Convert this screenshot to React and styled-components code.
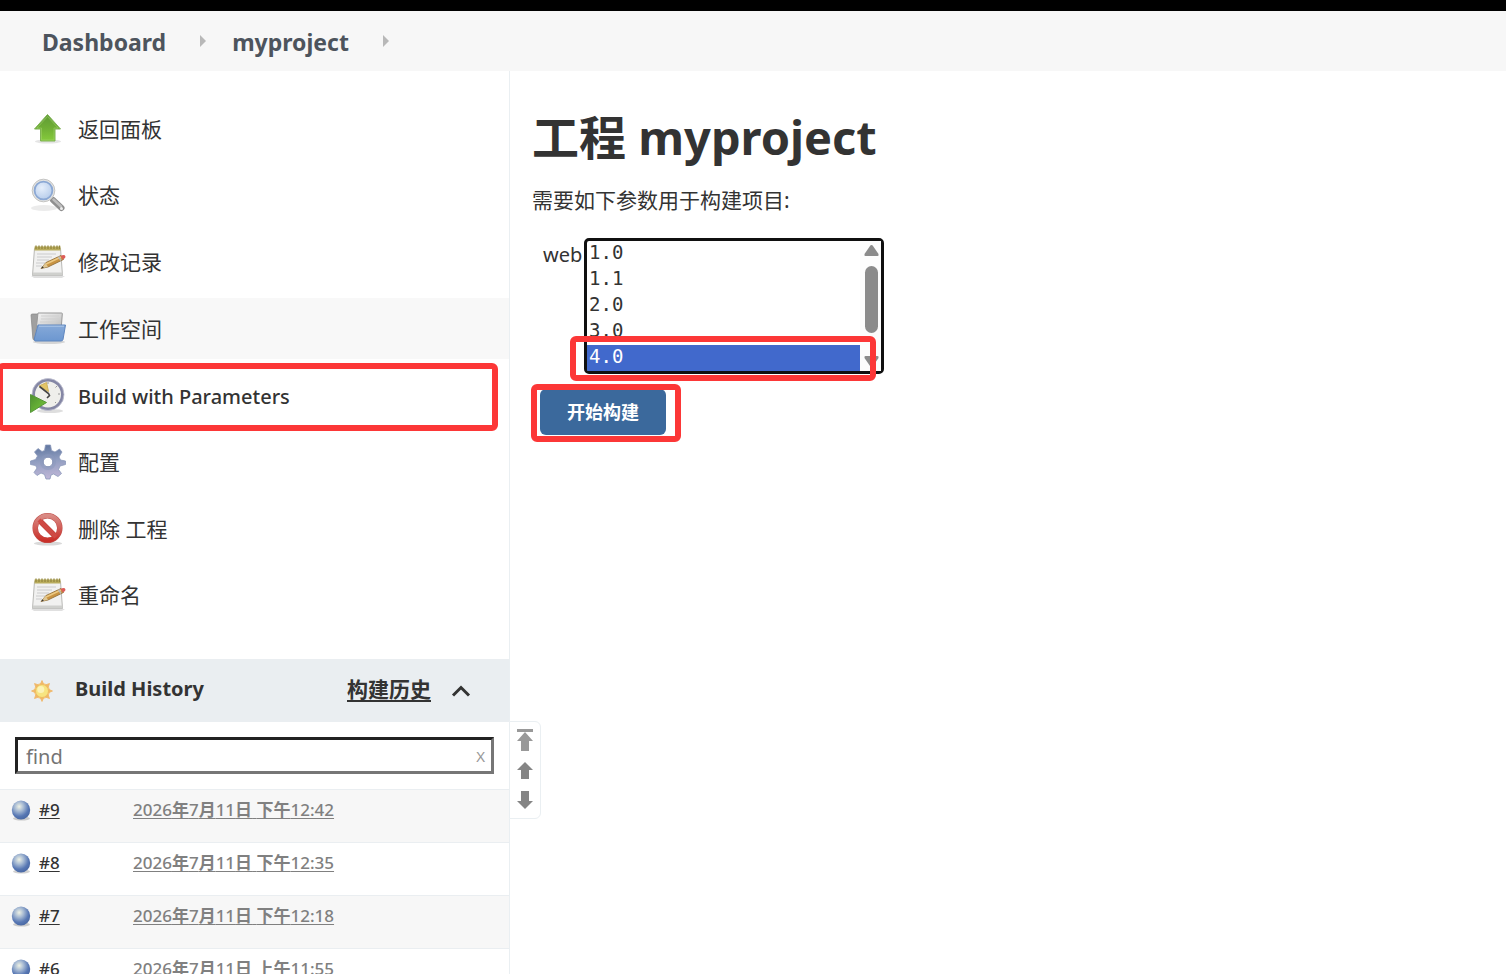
import React from "react";
import styled, { createGlobalStyle } from "styled-components";

const GlobalStyle = createGlobalStyle`
  *, *::before, *::after { box-sizing: border-box; }
  body {
    margin: 0;
    background: #fff;
    color: #333;
    font-family: "Noto Sans", "Noto Sans CJK SC", sans-serif;
    font-size: 21px;
  }
  button, input, select { font-family: inherit; }
`;

const Page = styled.div`
  display: flex;
  flex-direction: column;
  height: 100vh;
  overflow: hidden;
`;

const TopBar = styled.header`
  flex: none;
  height: 11px;
  background: #000;
`;

const Breadcrumbs = styled.nav`
  display: flex;
  flex: none;
  align-items: center;
  height: 60px;
  padding: 0 42px;
  background: #f7f7f7;
`;

const Crumb = styled.a`
  margin-bottom: -2px;
  color: #4d545d;
  font-size: 23px;
  font-weight: 700;
  line-height: 32px;
  text-decoration: none;
`;

const CrumbArrow = styled.svg`
  width: 6px;
  height: 12px;
  margin: 0 26px 0 34px;
  fill: #b8b8b8;
`;

const Columns = styled.div`
  display: flex;
  flex: 1;
  min-height: 0;
`;

const Sidebar = styled.aside`
  flex: none;
  width: 510px;
  border-right: 1px solid #eaeff2;
`;

const TaskList = styled.nav`
  display: grid;
  align-content: space-between;
  height: 528px;
  margin: 27px 0 33px;
`;

const Task = styled.a`
  position: relative;
  display: flex;
  align-items: center;
  gap: 12px;
  height: 61px;
  padding-left: 30px;
  background: ${(p) => (p.$hovered ? "#f8f8f8" : "transparent")};
  color: #333;
  text-decoration: none;
`;

const TaskLabel = styled.span`
  padding: ${(p) => (p.$latin ? "2px 0 0" : "0 0 2px")};
  font-size: ${(p) => (p.$latin ? "20px" : "21px")};
  font-weight: ${(p) => (p.$latin ? 500 : 400)};
`;

const TaskIcon = styled.svg`
  flex: none;
  width: 36px;
  height: 36px;
`;

const Highlight = styled.span`
  position: absolute;
  inset: ${(p) => p.$inset};
  border: 6px solid #fc3737;
  border-radius: 6px;
  pointer-events: none;
`;

const History = styled.section`
  position: relative;
`;

const HistoryHeader = styled.div`
  display: flex;
  align-items: center;
  height: 63px;
  padding: 0 38px 0 30px;
  background: #eaeef1;
`;

const HistoryTitle = styled.h2`
  flex: 1;
  margin: 0 0 4px 21px;
  font-size: 20px;
  font-weight: 700;
`;

const TrendLink = styled.a`
  margin-bottom: 6px;
  color: #333;
  font-weight: 700;
  text-underline-offset: 3px;
`;

const CollapseButton = styled.button`
  display: flex;
  margin-left: 20px;
  padding: 0;
  border: 0;
  background: none;
`;

const SunIcon = styled.svg`
  width: 24px;
  height: 24px;
`;

const SearchBar = styled.div`
  display: flex;
  align-items: center;
  height: 37px;
  margin: 15px;
  border: 3px solid;
  border-color: #222 #767676 #767676 #222;
`;

const SearchInput = styled.input`
  flex: 1;
  min-width: 0;
  padding: 2px 8px 0;
  border: 0;
  outline: 0;
  color: #333;
  font-size: 20px;
  &::placeholder { color: #757575; opacity: 1; }
`;

const ClearButton = styled.button`
  padding: 0 6px;
  border: 0;
  background: none;
  color: #999;
  font-size: 15px;
  line-height: 24px;
`;

const BuildTable = styled.table`
  width: 100%;
  border-collapse: collapse;
  font-size: 17px;
  line-height: 24px;
`;

const BuildRow = styled.tr`
  height: 53px;
  border-top: 1px solid #eaeef1;
  vertical-align: top;
  &:nth-child(odd) { background: #f7f7f7; }
`;

const NumberCell = styled.td`
  width: 133px;
  padding: 8px 0 0 10px;
`;

const DateCell = styled.td`
  padding: 8px 0 0;
`;

const BuildNumber = styled.span`
  display: flex;
  align-items: center;
  gap: 7px;
  height: 24px;
`;

const BuildLink = styled.a`
  color: ${(p) => (p.$muted ? "#808080" : "#333")};
  font-weight: 500;
  text-underline-offset: 2px;
`;

const Cjk = styled.span`
  font-weight: 700;
`;

const Ball = styled.svg`
  width: 22px;
  height: 22px;
`;

const Pager = styled.div`
  position: absolute;
  top: 62px;
  left: 100%;
  display: flex;
  flex-direction: column;
  align-items: center;
  gap: 10px;
  width: 32px;
  height: 98px;
  padding-top: 7px;
  border: 1px solid #eaeff2;
  border-radius: 0 6px 6px 0;
  background: #fff;
`;

const PagerButton = styled.button`
  display: flex;
  padding: 0;
  border: 0;
  background: none;
`;

const Main = styled.main`
  flex: 1;
  padding: 30px 22px;
`;

const Title = styled.h1`
  margin: 0;
  font-size: 47px;
  font-weight: 700;
  line-height: 72px;
`;

const Intro = styled.p`
  margin: 11px 0 22px;
  line-height: 32px;
`;

const ParameterRow = styled.div`
  display: flex;
  align-items: flex-start;
  gap: 3px;
  padding-left: 11px;
`;

const ParameterLabel = styled.label`
  width: 38px;
  font-size: 20px;
  line-height: 34px;
`;

const ListWrap = styled.div`
  position: relative;
  width: 300px;
`;

const ListBox = styled.select`
  display: block;
  width: 100%;
  height: 136px;
  padding: 0 21px 0 0;
  overflow: hidden;
  border: 3px solid #101010;
  border-radius: 5px;
  outline: 0;
  background: #fff;
  color: #333;
  font-family: "DejaVu Sans Mono", monospace;
  font-size: 19px;
`;

const Choice = styled.option`
  height: 26px;
  min-height: 26px;
  padding: 0 2px 1px;
  line-height: 25px;
  &:checked {
    background: linear-gradient(#4169cc, #4169cc);
    -webkit-text-fill-color: #fff;
  }
`;

const ScrollTrack = styled.svg`
  position: absolute;
  top: 3px;
  right: 3px;
  width: 21px;
  height: 130px;
  fill: #8b8b8b;
  background: #fcfcfc;
`;

const SubmitWrap = styled.div`
  position: relative;
  width: 126px;
  margin: 15px 0 0 8px;
`;

const SubmitButton = styled.button`
  width: 100%;
  height: 46px;
  padding: 0 0 2px;
  border: 0;
  border-radius: 6px;
  background: #3b699c;
  color: #fff;
  font-size: 18px;
  font-weight: 700;
`;

const UpArt = () => (
  <>
    <defs>
      <linearGradient id="up" x1="0" y1="0" x2="0" y2="1">
        <stop offset="0" stopColor="#5f9a35" />
        <stop offset="0.5" stopColor="#6fae35" />
        <stop offset="1" stopColor="#86cb3c" />
      </linearGradient>
    </defs>
    <ellipse cx="18" cy="30.500" rx="13" ry="2" fill="#000" opacity="0.1" />
    <path d="M17.500 3.500L30.500 18H25V30H10.500V18H4.500Z" fill="url(#up)" stroke="#7fb255" />
    <path d="M17.500 5.500L28 17H24V29H11.500V17H7Z" fill="none" stroke="#a5d66f" strokeOpacity=".5" />
  </>
);

const SearchArt = () => (
  <>
    <defs>
      <radialGradient id="lens" cx="0.4" cy="0.35" r="0.7">
        <stop offset="0" stopColor="#e6effb" />
        <stop offset="1" stopColor="#b5cbea" />
      </radialGradient>
    </defs>
    <ellipse cx="14" cy="31" rx="13" ry="3" fill="#000" opacity="0.08" />
    <path d="M23 23L31.500 31" stroke="#8f8f8f" strokeWidth="6" strokeLinecap="round" />
    <path d="M23.500 22.500L31 29.500" stroke="#bdbdbd" strokeWidth="2.500" strokeLinecap="round" />
    <circle cx="31.500" cy="31.500" r="1.500" fill="#ededed" />
    <circle cx="13.500" cy="13.500" r="11.300" fill="#e4e4e2" stroke="#c4c4c2" />
    <circle cx="13.500" cy="13.500" r="8.900" fill="url(#lens)" stroke="#8ba8d4" strokeWidth="1.800" />
  </>
);

const NotepadArt = () => (
  <>
    <path d="M1 32H35L32 34H4Z" fill="#000" opacity="0.12" />
    <path d="M4.500 4.500H30.500L32.500 31.500H2.500Z" fill="#f1f1f0" stroke="#b9b9b6" />
    <path d="M3 28.500H32.500V31.500H2.500Z" fill="#cfd0cd" />
    <path d="M4.500 2.500H30.500V6.500H4.500Z" fill="#b9ac5c" />
    <path d="M6 1.500V5M9 1.500V5M12 1.500V5M15 1.500V5M18 1.500V5M21 1.500V5M24 1.500V5M27 1.500V5M29.500 1.500V5" stroke="#94883f" strokeWidth="1.300" />
    <path d="M7 10H26M7 13H22M7 16H19M6 19H16M6 22H12" stroke="#cbcbcb" strokeWidth="1.200" />
    <path d="M11 24.500L16 18.500L31 11.500L33.500 15.500L18 23Z" fill="#c99442" stroke="#8c6a35" strokeWidth="0.800" />
    <path d="M16 20L31 13" stroke="#edca83" strokeWidth="1.500" />
    <path d="M11 24.500L15.500 19L18 22.800Z" fill="#dfc794" />
    <path d="M11 24.500L12.800 22.200L13.800 23.800Z" fill="#333" />
    <path d="M30.500 12L33 11Q36.500 11 35 14L33 15.500Z" fill="#dc5d59" />
    <path d="M28.500 12.500L31 16.500" stroke="#b9b9b9" strokeWidth="1.500" />
  </>
);

const FolderArt = () => (
  <>
    <defs>
      <linearGradient id="folder" x1="0" y1="0" x2="0" y2="1">
        <stop offset="0" stopColor="#86a9d8" />
        <stop offset="1" stopColor="#6c97d0" />
      </linearGradient>
      <linearGradient id="paper" x1="0" y1="0" x2="1" y2="1">
        <stop offset="0" stopColor="#f6f6f6" />
        <stop offset="1" stopColor="#b6b6b6" />
      </linearGradient>
    </defs>
    <ellipse cx="19" cy="31" rx="16" ry="2" fill="#000" opacity="0.14" />
    <path d="M1 4Q1 3 2.500 3H11L13 5H30V29H4Q3 29 2.800 27Z" fill="#a0a0a0" stroke="#858585" strokeWidth="0.700" />
    <path d="M8 2H31.500Q32.500 2 32.300 3L31 20H6Z" fill="url(#paper)" stroke="#999" />
    <path d="M11 5H29M11 8H29M10 11H25" stroke="#cfcfcf" />
    <path d="M8 14H35.500L33 28.500Q32.600 30 31 30H5Q4 30 4.500 27Z" fill="url(#folder)" stroke="#5f86be" />
    <path d="M9 15.200H34" stroke="#afc8e8" />
  </>
);

const ClockArt = () => (
  <>
    <defs>
      <linearGradient id="play" x1="0" y1="0" x2="1" y2="1">
        <stop offset="0" stopColor="#4d8f30" />
        <stop offset="1" stopColor="#7bcb3c" />
      </linearGradient>
    </defs>
    <ellipse cx="20" cy="34" rx="13" ry="2" fill="#000" opacity="0.13" />
    <circle cx="18" cy="17.500" r="14.500" fill="#efefeb" stroke="#8587a5" strokeWidth="3" />
    <circle cx="18" cy="17.500" r="16" fill="none" stroke="#c0c2d2" strokeWidth="0.800" />
    <path d="M9 9L16.500 5.500L18.500 14.500Z" fill="#e3c568" stroke="#cfb25c" />
    <path d="M9.500 9.500L18.500 16.500L19.500 18.500L17 21" fill="none" stroke="#444" strokeWidth="1.600" />
    <path d="M18 5V7M30 17H28M27 9L25.500 10.500M26 26L25 25" stroke="#999" />
    <path d="M0.500 17.500L16.500 25.500L0.500 35.500Z" fill="url(#play)" stroke="#56963a" />
  </>
);

const GearArt = () => (
  <>
    <defs>
      <linearGradient id="gear" x1="0.500" y1="0" x2="0.600" y2="1">
        <stop offset="0" stopColor="#6177a0" />
        <stop offset="0.450" stopColor="#909dc0" />
        <stop offset="1" stopColor="#c1b7d8" />
      </linearGradient>
    </defs>
    <path
      d="M15.500 1H20.500L21.500 6.500L25 8L29.500 5L32 8L29 13L30.500 16L35.500 17V20.500L30 22L28.500 25.500L31.500 29.500L28 32.500L23.500 30L21 31L20 35H16L14.500 30.500L11 29L7 31.500L4 28.500L7 24L5.500 21.500L0.500 20.500V17L5.500 15.500L7.500 12L4.500 8L8 4.500L12 7.500L14.500 6.500Z"
      fill="url(#gear)" stroke="#8a98ba" strokeWidth="0.800" strokeLinejoin="round"
    />
    <circle cx="18" cy="18" r="8" fill="#8a97bb" opacity="0.500" />
    <circle cx="18" cy="18" r="4.800" fill="#fff" stroke="#8491b4" />
  </>
);

const ForbidArt = () => (
  <>
    <defs>
      <linearGradient id="forbid" x1="0" y1="0" x2="0" y2="1">
        <stop offset="0" stopColor="#d98a84" />
        <stop offset="1" stopColor="#c9302a" />
      </linearGradient>
    </defs>
    <ellipse cx="18" cy="32.500" rx="14" ry="2" fill="#000" opacity="0.15" />
    <circle cx="17.500" cy="17" r="12.300" fill="#fff" stroke="#c0504b" strokeWidth="5.500" />
    <path d="M9 9L26 26" stroke="#c0403a" strokeWidth="5.500" />
    <circle cx="17.500" cy="17" r="12.300" fill="none" stroke="url(#forbid)" strokeWidth="4.500" />
    <path d="M9 9L26 26" stroke="#cf4a44" strokeWidth="4.300" />
  </>
);

const tasks = [
  { label: "返回面板", Art: UpArt },
  { label: "状态", Art: SearchArt },
  { label: "修改记录", Art: NotepadArt },
  { label: "工作空间", Art: FolderArt, hovered: true },
  { label: "Build with Parameters", Art: ClockArt, latin: true, marked: true },
  { label: "配置", Art: GearArt },
  { label: "删除 工程", Art: ForbidArt },
  { label: "重命名", Art: NotepadArt },
];

const builds = [
  { id: 9, half: "下午", time: "12:42" },
  { id: 8, half: "下午", time: "12:35" },
  { id: 7, half: "下午", time: "12:18" },
  { id: 6, half: "上午", time: "11:55" },
];

const pagerShapes = [
  { label: "Newest builds", height: 22, path: "M1 0H17V3H1ZM9 3L17 12H13V22H5V12H1Z", fill: "#999" },
  { label: "Newer builds", height: 19, path: "M9 1L17 9H13V18H5V9H1Z", fill: "#858585" },
  { label: "Older builds", height: 19, path: "M9 19L17 11H13V1H5V11H1Z", fill: "#858585" },
];

function BuildBall() {
  return (
    <Ball viewBox="0 0 22 22" aria-hidden="true">
      <defs>
        <radialGradient id="ball" cx="0.400" cy="0.320" r="0.680">
          <stop offset="0" stopColor="#eef1e4" />
          <stop offset="0.350" stopColor="#a9bcd4" />
          <stop offset="0.750" stopColor="#5878b4" />
          <stop offset="1" stopColor="#4a69a4" />
        </radialGradient>
      </defs>
      <ellipse cx="11.500" cy="19.500" rx="8.500" ry="2" fill="#000" opacity="0.180" />
      <ellipse cx="11" cy="11" rx="9.200" ry="9.500" fill="url(#ball)" />
    </Ball>
  );
}

export default function App() {
  return (
    <Page>
      <GlobalStyle />
      <TopBar />
      <Breadcrumbs>
        {["Dashboard", "myproject"].map((name) => (
          <React.Fragment key={name}>
            <Crumb href="#">{name}</Crumb>
            <CrumbArrow viewBox="0 0 6 12"><path d="M0 0L6 6L0 12Z" /></CrumbArrow>
          </React.Fragment>
        ))}
      </Breadcrumbs>
      <Columns>
        <Sidebar>
          <TaskList>
            {tasks.map(({ label, Art, hovered, latin, marked }) => (
              <Task key={label} href="#" $hovered={hovered}>
                <TaskIcon viewBox="0 0 36 36" aria-hidden="true"><Art /></TaskIcon>
                <TaskLabel $latin={latin}>{label}</TaskLabel>
                {marked && <Highlight $inset="-2px 11px -5px -3px" />}
              </Task>
            ))}
          </TaskList>
          <History>
            <HistoryHeader>
              <SunIcon viewBox="0 0 24 24" aria-hidden="true">
                <circle cx="12" cy="12" r="8" fill="#f7cf8e" />
                <path
                  d="M12 1.500L13.800 5.500H10.200ZM12 22.500L13.800 18.500H10.200ZM1.500 12L5.500 10.200V13.800ZM22.500 12L18.500 10.200V13.800ZM4.500 4.500L8.800 6L6 8.800ZM19.500 4.500L18 8.800L15.200 6ZM4.500 19.500L6 15.200L8.800 18ZM19.500 19.500L15.200 18L18 15.200Z"
                  fill="#f0b768" stroke="#f0b768" strokeWidth="0.800" strokeLinejoin="round"
                />
                <circle cx="12" cy="12" r="6.500" fill="#f7e480" stroke="#eebc62" />
                <circle cx="10.800" cy="10.500" r="3.500" fill="#fbf3b8" />
              </SunIcon>
              <HistoryTitle>Build History</HistoryTitle>
              <TrendLink href="#">构建历史</TrendLink>
              <CollapseButton aria-label="Collapse">
                <svg width="20" height="14" viewBox="0 0 20 14" fill="none" stroke="#333" strokeWidth="3">
                  <path d="M2 11.500L10 3.500L18 11.500" />
                </svg>
              </CollapseButton>
            </HistoryHeader>
            <SearchBar>
              <SearchInput placeholder="find" aria-label="find" />
              <ClearButton>X</ClearButton>
            </SearchBar>
            <BuildTable>
              <tbody>
                {builds.map(({ id, half, time }) => (
                  <BuildRow key={id}>
                    <NumberCell>
                      <BuildNumber>
                        <BuildBall />
                        <BuildLink href="#">#{id}</BuildLink>
                      </BuildNumber>
                    </NumberCell>
                    <DateCell>
                      <BuildLink href="#" $muted>
                        2026<Cjk>年</Cjk>7<Cjk>月</Cjk>11<Cjk>日</Cjk> <Cjk>{half}</Cjk>{time}
                      </BuildLink>
                    </DateCell>
                  </BuildRow>
                ))}
              </tbody>
            </BuildTable>
            <Pager>
              {pagerShapes.map(({ label, height, path, fill }) => (
                <PagerButton key={label} aria-label={label}>
                  <svg width="18" height={height} viewBox={`0 0 18 ${height}`} fill={fill}><path d={path} /></svg>
                </PagerButton>
              ))}
            </Pager>
          </History>
        </Sidebar>
        <Main>
          <Title>工程 myproject</Title>
          <Intro>需要如下参数用于构建项目:</Intro>
          <ParameterRow>
            <ParameterLabel htmlFor="web">web</ParameterLabel>
            <ListWrap>
              <ListBox id="web" size={5} defaultValue="4.0" autoFocus>
                {["1.0", "1.1", "2.0", "3.0", "4.0"].map((v) => <Choice key={v} value={v}>{v}</Choice>)}
              </ListBox>
              <ScrollTrack viewBox="-1 0 21 130" aria-hidden="true">
                <path d="M10.500 4Q11.500 4 12 5L17.500 13Q18 15 16.500 15H4.500Q3 15 3.500 13L9 5Q9.500 4 10.500 4Z" />
                <rect x="4" y="25" width="13" height="67" rx="6.500" />
                <path d="M10.500 126Q11.500 126 12 125L17.500 117Q18 115 16.500 115H4.500Q3 115 3.500 117L9 125Q9.500 126 10.500 126Z" />
              </ScrollTrack>
              <Highlight $inset="98px 8px -7px -14px" />
            </ListWrap>
          </ParameterRow>
          <SubmitWrap>
            <SubmitButton>开始构建</SubmitButton>
            <Highlight $inset="-5px -15px -7px -9px" />
          </SubmitWrap>
        </Main>
      </Columns>
    </Page>
  );
}
